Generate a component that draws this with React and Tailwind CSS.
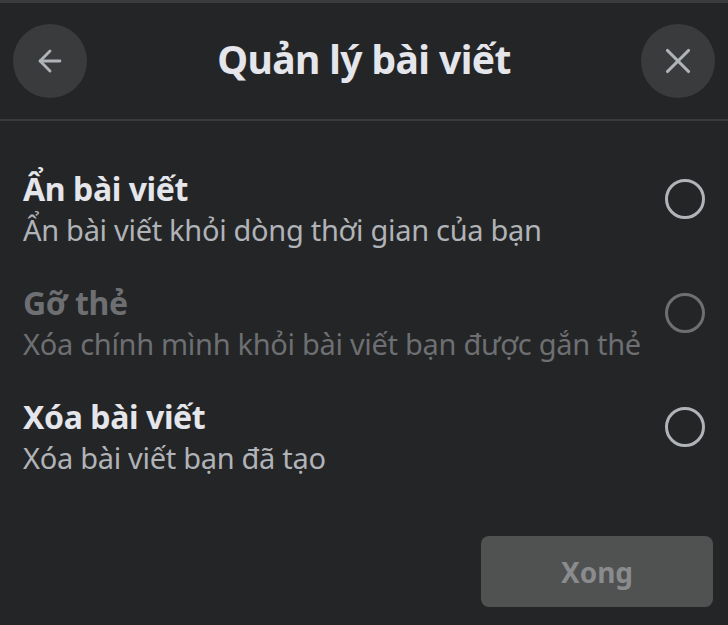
import { ArrowLeft, X } from "lucide-react";

const options = [
  { title: "Ẩn bài viết", desc: "Ẩn bài viết khỏi dòng thời gian của bạn", disabled: false },
  { title: "Gỡ thẻ", desc: "Xóa chính mình khỏi bài viết bạn được gắn thẻ", disabled: true },
  { title: "Xóa bài viết", desc: "Xóa bài viết bạn đã tạo", disabled: false },
];

const App = () => {
  return (
    <div
      className="w-[728px] h-[625px] bg-[#242526] flex flex-col overflow-hidden"
      style={{ fontFamily: '"Noto Sans", "Open Sans", sans-serif' }}
    >
      <div className="h-[3px] bg-[#3a3b3c]" />
      <div className="h-[118px] flex items-center justify-between px-[13px] border-b-2 border-[#3a3b3c]">
        <button className="w-[74px] h-[74px] rounded-full bg-[#3a3b3c] flex items-center justify-center text-[#b0b3b8]">
          <ArrowLeft size={34} strokeWidth={2} />
        </button>
        <h1 className="text-[39px] font-bold text-[#e4e6eb] tracking-[-0.6px] -mt-[3px]">Quản lý bài viết</h1>
        <button className="w-[74px] h-[74px] rounded-full bg-[#3a3b3c] flex items-center justify-center text-[#b0b3b8]">
          <X size={42} strokeWidth={1.8} />
        </button>
      </div>

      <div className="flex flex-col gap-[32px] pt-[48px] pl-[23px] pr-[23px]">
        {options.map((opt, idx) => (
          <div key={idx} className="flex items-center justify-between">
            <div className="flex flex-col">
              <span
                className={
                  "text-[32px] font-bold leading-[40px] tracking-[-0.4px] " +
                  (opt.disabled ? "text-[#6d6f72]" : "text-[#e4e6eb]")
                }
              >
                {opt.title}
              </span>
              <span
                className={
                  "text-[29px] leading-[42px] tracking-[-0.3px] " +
                  (opt.disabled ? "text-[#6d6f72]" : "text-[#b0b3b8]")
                }
              >
                {opt.desc}
              </span>
            </div>
            <div
              className={
                "w-[40px] h-[40px] rounded-full border-[3px] -mt-[22px] shrink-0 " +
                (opt.disabled ? "border-[#6d6f72]" : "border-[#b0b3b8]")
              }
            />
          </div>
        ))}
      </div>

      <div className="flex justify-end pr-[15px] mt-auto mb-[18px]">
        <button className="w-[232px] h-[71px] rounded-lg bg-[#505151] text-[#8a8b8d] text-[28px] font-bold">
          Xong
        </button>
      </div>
    </div>
  );
};

export default App;
